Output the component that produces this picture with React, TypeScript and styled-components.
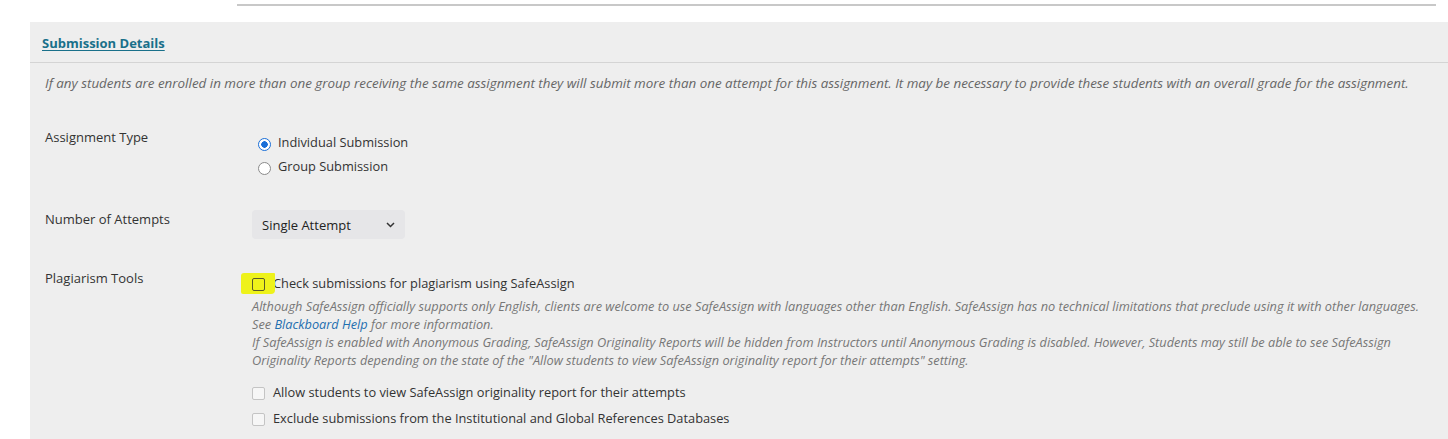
import styled, { createGlobalStyle } from "styled-components";

const GlobalStyle = createGlobalStyle`
    body {
        margin: 0;
        background: #ffffff;
        font-family: "Open Sans", "Noto Sans", sans-serif;
        color: #333333;
    }
`;

const Page = styled.div`
    width: 1448px;
    height: 439px;
    overflow: hidden;
`;
const TopRule = styled.div`
    margin-left: 237px;
    width: 1199px;
    height: 4px;
    border-bottom: 2px solid #c8c8c8;
`;
const Panel = styled.section`
    margin: 16px 0 0 30px;
    background: #eeeeee;
    height: 440px;
`;
const PanelHeader = styled.div`
    height: 40px;
    display: flex;
    align-items: center;
    padding-left: 12px;
    border-bottom: 1px solid #d4d4d4;
`;
const PanelTitle = styled.a`
    font-size: 13px;
    font-weight: 700;
    color: #19708a;
    text-decoration: underline;
    text-underline-offset: 2px;
    margin-top: 1px;
`;
const Notice = styled.p`
    margin: 11px 0 0 15px;
    font-size: 13.4px;
    line-height: 18px;
    font-style: italic;
    color: #666666;
`;
const Fields = styled.div`
    display: flex;
    flex-direction: column;
    gap: 30px;
    margin: 36px 0 0 15px;
`;
const Field = styled.div`
    display: grid;
    grid-template-columns: 207px 1fr;
`;
const FieldLabel = styled.div`
    font-size: 13px;
    line-height: 18px;
`;
const Choices = styled.div<{ $offset?: number; $after?: number }>`
    display: flex;
    flex-direction: column;
    padding-top: ${(p) => p.$offset ?? 0}px;
    padding-bottom: ${(p) => p.$after ?? 0}px;
`;
const ChoiceRow = styled.label<{ $height?: number }>`
    display: flex;
    align-items: center;
    height: ${(p) => p.$height ?? 24}px;
    font-size: 12.8px;
    color: #333333;
`;
const Radio = styled.input.attrs({ type: "radio" })`
    appearance: none;
    margin: 4px 7px 0 6px;
    width: 13px;
    height: 13px;
    border-radius: 50%;
    border: 1.5px solid #8a8a8a;
    background: #ffffff;
    box-sizing: border-box;
    &:checked {
        border: 1.5px solid #1a6fd8;
        background: radial-gradient(circle, #1a6fd8 0 3px, #ffffff 3.5px);
    }
`;
const Check = styled.input.attrs({ type: "checkbox" })<{ $marked?: boolean }>`
    appearance: none;
    margin: 3px 8px 0 0;
    width: 13px;
    height: 13px;
    box-sizing: border-box;
    border-radius: 2px;
    border: 1px solid ${(p) => (p.$marked ? "#5a5a2a" : "#c4c4c4")};
    background: ${(p) => (p.$marked ? "transparent" : "#f6f6f6")};
    position: relative;
`;
const Marker = styled.span`
    position: relative;
    display: inline-flex;
    &::before {
        content: "";
        position: absolute;
        left: -11px;
        top: -2px;
        width: 34px;
        height: 21px;
        background: #eef21a;
        border-radius: 3px 1px 4px 2px;
    }
    & > input {
        z-index: 1;
    }
`;
const Select = styled.div`
    width: 153px;
    height: 29px;
    box-sizing: border-box;
    display: flex;
    align-items: center;
    justify-content: space-between;
    padding: 1px 10px 0 10px;
    background: #e6e6e8;
    border-radius: 4px;
    font-size: 13px;
    color: #222222;
`;
const HelpText = styled.div`
    max-width: 1172px;
    font-size: 12.75px;
    line-height: 18px;
    font-style: italic;
    color: #777777;
    margin: 3px 0 10px 0;
`;
const HelpLink = styled.a`
    color: #1f6fb0;
`;

export default function App() {
    return (
        <Page>
            <GlobalStyle />
            <TopRule />
            <Panel>
                <PanelHeader>
                    <PanelTitle>Submission Details</PanelTitle>
                </PanelHeader>
                <Notice>
                    If any students are enrolled in more than one group receiving the same assignment they will submit more than one attempt for this assignment. It may be necessary to provide these students with an overall grade for the assignment.
                </Notice>
                <Fields>
                    <Field>
                        <FieldLabel>Assignment Type</FieldLabel>
                        <Choices $offset={2} $after={2}>
                            <ChoiceRow>
                                <Radio name="type" defaultChecked />
                                Individual Submission
                            </ChoiceRow>
                            <ChoiceRow>
                                <Radio name="type" />
                                Group Submission
                            </ChoiceRow>
                        </Choices>
                    </Field>
                    <Field>
                        <FieldLabel>Number of Attempts</FieldLabel>
                        <div>
                            <Select>
                                Single Attempt
                                <svg width="9" height="6" viewBox="0 0 9 6">
                                    <path d="M1 1l3.5 3.5L8 1" fill="none" stroke="#333" strokeWidth="1.5" />
                                </svg>
                            </Select>
                        </div>
                    </Field>
                    <Field>
                        <FieldLabel>Plagiarism Tools</FieldLabel>
                        <Choices $offset={3}>
                            <ChoiceRow $height={22}>
                                <Marker>
                                    <Check $marked />
                                </Marker>
                                Check submissions for plagiarism using SafeAssign
                            </ChoiceRow>
                            <HelpText>
                                Although SafeAssign officially supports only English, clients are welcome to use SafeAssign with languages other than English. SafeAssign has no technical limitations that preclude using it with other languages.
                                <br />
                                See <HelpLink>Blackboard Help</HelpLink> for more information.
                                <br />
                                If SafeAssign is enabled with Anonymous Grading, SafeAssign Originality Reports will be hidden from Instructors until Anonymous Grading is disabled. However, Students may still be able to see SafeAssign Originality Reports depending on the state of the "Allow students to view SafeAssign originality report for their attempts" setting.
                            </HelpText>
                            <ChoiceRow $height={26}>
                                <Check />
                                Allow students to view SafeAssign originality report for their attempts
                            </ChoiceRow>
                            <ChoiceRow $height={26}>
                                <Check />
                                Exclude submissions from the Institutional and Global References Databases
                            </ChoiceRow>
                        </Choices>
                    </Field>
                </Fields>
            </Panel>
        </Page>
    );
}
